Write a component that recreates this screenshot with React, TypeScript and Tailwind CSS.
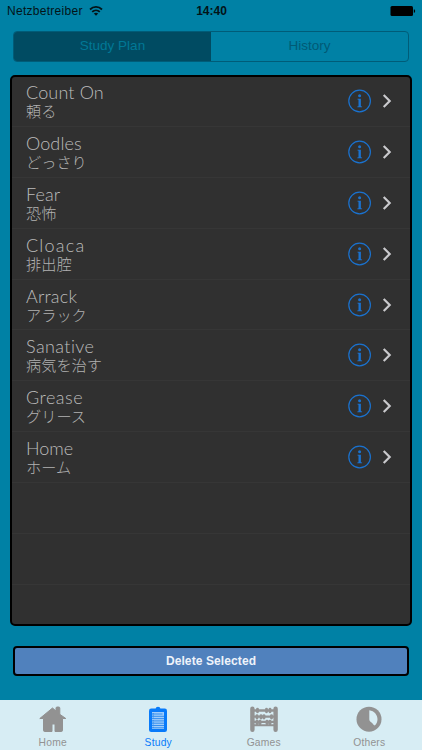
const words = [
  { en: 'Count On', ja: '頼る', track: 'tracking-[0.15px]' },
  { en: 'Oodles', ja: 'どっさり', track: 'tracking-[0.1px]' },
  { en: 'Fear', ja: '恐怖', track: 'tracking-[0.1px]' },
  { en: 'Cloaca', ja: '排出腔', track: 'tracking-[1.2px]' },
  { en: 'Arrack', ja: 'アラック', track: 'tracking-[0.2px]' },
  { en: 'Sanative', ja: '病気を治す', track: 'tracking-[0.4px]' },
  { en: 'Grease', ja: 'グリース', track: 'tracking-[0.5px]' },
  { en: 'Home', ja: 'ホーム', track: 'tracking-[0px]' },
];

function StatusBar() {
  return (
    <header className="grid h-[22px] grid-cols-3 items-center pl-[7px] pr-[6px] text-[12px] leading-none text-[#031418]">
      <div className="flex items-center gap-[6px]">
        <span className="tracking-[0.28px]">Netzbetreiber</span>
        <svg width="14" height="10" viewBox="0 0 14 10" fill="none" stroke="currentColor" strokeWidth="1.8">
          <path d="M1 3.5C4.4.1 9.6.1 13 3.5M3.2 5.9c2.2-2.1 5.4-2.1 7.6 0" />
          <path d="M7 9.8 4.8 7.5c1.3-1.1 3.1-1.1 4.4 0Z" fill="currentColor" stroke="none" />
        </svg>
      </div>
      <span className="text-center font-bold">14:40</span>
      <svg className="justify-self-end" width="26" height="10" viewBox="0 0 26 10" fill="#000">
        <rect x="0.5" width="22.5" height="10" rx="1.5" />
        <path d="M23.8 3.2c1.8.2 1.8 3.4 0 3.6Z" />
      </svg>
    </header>
  );
}

function InfoIcon() {
  return (
    <svg width="24" height="24" viewBox="0 0 24 24" fill="none">
      <circle cx="11.600" cy="12" r="10.800" stroke="#1a72cf" strokeWidth="1.200" />
      <circle cx="11.600" cy="6.700" r="1.500" fill="#1a72cf" />
      <path d="M9.500 9.700h3.400v7.500l1.200.4v.7H9.300v-.7l1.200-.4v-6.400l-1-.3Z" fill="#1a72cf" />
    </svg>
  );
}

function Chevron() {
  return (
    <svg width="10" height="14" viewBox="0 0 10 14" fill="none" stroke="#c9c9cc" strokeWidth="2.200">
      <path d="m1.700 1 6 6-6 6" />
    </svg>
  );
}

function HomeIcon() {
  return (
    <svg width="28" height="27" viewBox="0 0 28 27" fill="#929292" stroke="#929292" strokeLinejoin="round">
      <path strokeWidth="1" d="M13.500 2 17 5V2q0-1 1.200-1h1.400Q20.800 1 20.800 2v6.300l6 4.200H23.500v11.800q0 1.200-1.200 1.200H16v-7.500h-3v7.500H5.700q-1.200 0-1.200-1.200V12.500H.8Z" />
    </svg>
  );
}

function ClipboardIcon() {
  return (
    <svg width="20" height="27" viewBox="0 0 20 27">
      <rect x="1" y="2.500" width="18" height="23.500" rx="2.200" fill="#087bfa" />
      <path d="M5.500 5.500V3.200h2Q7.800.8 10 .8t2.500 2.400h2v2.300Z" fill="#087bfa" />
      <rect x="4" y="6" width="12" height="17" fill="#9fcdfb" />
      <path d="M4 8h10.500M4 10.300h12M4 12.600h12M4 14.900h12M4 17.200h12M4 19.500h12M4 21.800h12" stroke="#358fef" strokeWidth="1" />
      <path d="M5.200 7v15" stroke="#358fef" strokeWidth="1.200" strokeDasharray="1.4 .9" />
    </svg>
  );
}

function AbacusIcon() {
  return (
    <svg width="28" height="27" viewBox="0 0 28 27" fill="none" stroke="#929292" strokeLinecap="round">
      <path d="M2.400 2.800v21M25.600 2.800v21" strokeWidth="4.400" />
      <path d="M2 4.500h24M2 10.600h24M2 15.900h24" strokeWidth="2.300" />
      <path d="M2 19.200h24" strokeWidth="2" />
      <path d="M7.500 3.200v2.500M16.500 3.200v2.500M20 3.200v2.500M7 9.600v2.500M11 9.600v2.500M14 9.600v2.500M21.500 9.600v2.500M7 15.300v2.500M10 15.300v2.500M17 15.300v2.500M20 15.300v2.500" strokeWidth="2.900" />
    </svg>
  );
}

function ContrastIcon() {
  return (
    <svg width="26" height="27" viewBox="0 0 26 27">
      <circle cx="13" cy="13.200" r="12.500" fill="#929292" />
      <path d="M13.300 4.300c5 .8 8.200 4.500 8.200 9 0 2.500-1 4.700-2.700 6.300-1.400-.8-2-2.300-3.300-3.200-1.500-1-2.200-1.600-2.200-3.100Z" fill="#d7edf4" />
    </svg>
  );
}

const tabs = [
  { label: 'Home', icon: <HomeIcon />, color: 'text-[#929292]' },
  { label: 'Study', icon: <ClipboardIcon />, color: 'text-[#087bfa]' },
  { label: 'Games', icon: <AbacusIcon />, color: 'text-[#929292]' },
  { label: 'Others', icon: <ContrastIcon />, color: 'text-[#929292]' },
];

export default function App() {
  return (
    <div className="flex h-[750px] w-[422px] flex-col overflow-hidden bg-[#0081a5] font-['Liberation_Sans',Arial,sans-serif]">
      <StatusBar />
      <div className="mx-[13px] mt-[9px] flex h-[31px] shrink-0 overflow-hidden rounded-[4px] border border-[#005c78] text-[13.500px]">
        <button className="w-[197px] bg-[#004b62] text-[#007896]">Study Plan</button>
        <button className="flex-1 text-[#005a75]">History</button>
      </div>
      <main className="mx-[10px] mt-[13px] h-[551px] shrink-0 overflow-hidden rounded-[5px] border-2 border-black bg-[#303030]">
        <ul className="-mt-[1px]">
          {words.map((w) => (
            <li key={w.en} className="flex h-[50.900px] items-center border-b border-[#363636] pl-[14px] pr-[18px]">
              <div className="flex-1">
                <div className={`pt-px font-['Lato',sans-serif] text-[18px] font-light leading-[18px] text-[#bcbcbc] ${w.track}`}>{w.en}</div>
                <div className="font-['Noto_Sans_CJK_JP',sans-serif] text-[15.200px] font-light leading-[19px] text-[#b2b2b2]">{w.ja}</div>
              </div>
              <div className="flex items-center gap-[10px]">
                <InfoIcon />
                <Chevron />
              </div>
            </li>
          ))}
          <li className="h-[50.900px] border-b border-[#363636]" />
          <li className="h-[50.900px] border-b border-[#363636]" />
        </ul>
      </main>
      <button className="mx-[13px] mt-[20px] h-[30px] shrink-0 rounded-[4px] border-2 border-black bg-[#5081bd] text-[12px] font-bold tracking-[0.100px] text-[#eef3fa]">
        Delete Selected
      </button>
      <nav className="mt-auto grid h-[50px] grid-cols-4 bg-[#d7edf4]">
        {tabs.map((t) => (
          <div key={t.label} className={`flex flex-col items-center pt-[6px] text-[10.300px] leading-[12px] tracking-[0.200px] ${t.color}`}>
            {t.icon}
            <span className="mt-[4px]">{t.label}</span>
          </div>
        ))}
      </nav>
    </div>
  );
}
